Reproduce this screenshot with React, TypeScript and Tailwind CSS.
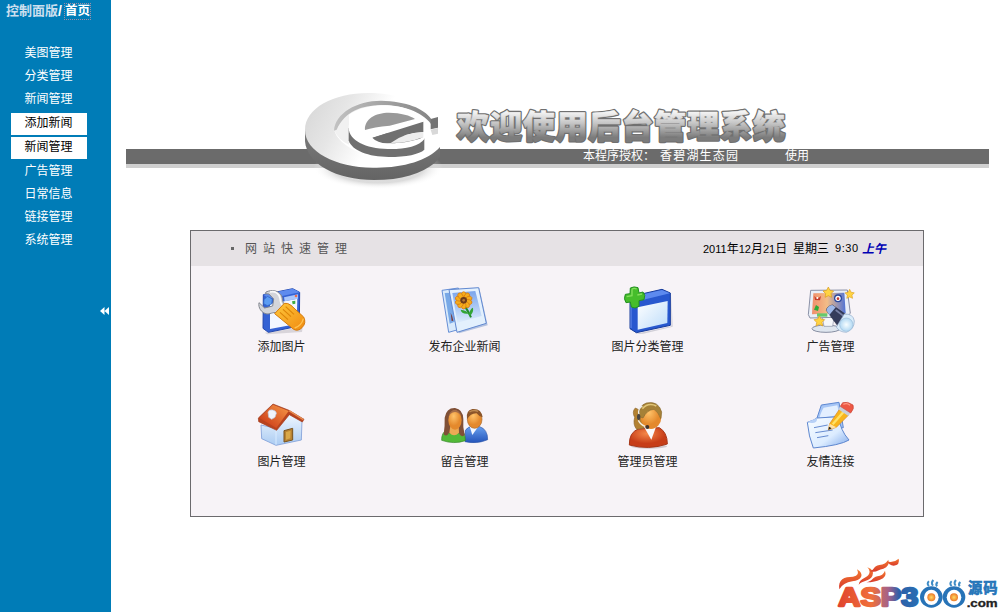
import React from 'react';

const menuItems = [
  { label: '美图管理' },
  { label: '分类管理' },
  { label: '新闻管理' },
  { label: '添加新闻', active: true, gap: 'mt-[3px]' },
  { label: '新闻管理', active: true, gap: 'mt-[2px]' },
  { label: '广告管理' },
  { label: '日常信息' },
  { label: '链接管理' },
  { label: '系统管理' },
];

function ToolIcon() {
  return (
    <svg viewBox="231 198 150 150" className="w-[50px] h-[50px]">
      <defs>
        <linearGradient id="toolOrange" x1="0" y1="0" x2="1" y2="1">
          <stop offset="0" stopColor="#ffc93c" />
          <stop offset="1" stopColor="#f08a10" />
        </linearGradient>
      </defs>
      <path d="M254 338 L368 322 L366 336 L262 343 Z" fill="#b9b6bd" opacity=".5" />
      <path d="M250 224 L338 206 L359 217 L358 318 L265 337 L249 325 Z" fill="#3562d4" stroke="#2347ad" strokeWidth="3" strokeLinejoin="round" />
      <path d="M250 224 L338 206 L359 217 L268 236 Z" fill="#5e8bee" />
      <path d="M270 252 L352 236 L350 312 L270 327 Z" fill="#f3f7ff" />
      <path d="M312 232 L354 223 L354 236 L314 244 Z" fill="#a9c6fb" />
      <circle cx="348" cy="228" r="4" fill="#ef6a4a" />
      <path d="M336 244 l10 -2 v9 l-8 2z" fill="#3faa40" />
      <path d="M258 216 C276 208 296 211 305 228 C309 238 306 248 315 254 L292 281 C283 273 274 282 261 282 C244 279 234 263 237 248 L254 264 L278 258 L281 237 L267 222 L256 221 Z" fill="#d3d5da" stroke="#83868f" strokeWidth="3" strokeLinejoin="round" />
      <path d="M270 216 C286 212 297 221 300 234 C301 246 303 254 309 257" fill="none" stroke="#fafafa" strokeWidth="5" />
      <path d="M252 239 L262 229 L277 237 L275 252 L262 257 L251 251 Z" fill="#5c9cf3" stroke="#2e62bd" strokeWidth="2" />
      <path d="M284 281 L313 250 Q323 248 333 256 L371 291 Q380 309 366 323 Q354 335 341 328 Z" fill="url(#toolOrange)" stroke="#d47a0c" strokeWidth="3" strokeLinejoin="round" />
      <path d="M309 268 L333 290 M317 260 L342 283 M300 277 L324 299" stroke="#dc8508" strokeWidth="3.5" />
      <path d="M344 324 Q365 317 370 296" stroke="#ffc252" strokeWidth="4" fill="none" />
    </svg>
  );
}

function PhotosIcon() {
  const petals = [0, 36, 72, 108, 144, 180, 216, 252, 288, 324];
  return (
    <svg viewBox="60 18 150 150" className="w-[50px] h-[50px]">
      <defs>
        <linearGradient id="photoSky" x1="0" y1="0" x2="0" y2="1">
          <stop offset="0" stopColor="#7aa5ec" />
          <stop offset="1" stopColor="#ddecfc" />
        </linearGradient>
      </defs>
      <path d="M66 31 L115 24 L128 145 L86 157 Z" fill="#d9eafb" stroke="#668ed6" strokeWidth="3" strokeLinejoin="round" />
      <path d="M74 39 L93 38 L104 125 L89 131 Z" fill="#78a8e6" />
      <path d="M92 98 l5 12 l3 12 l-5 1z" fill="#7d3434" />
      <path d="M92 28 L178 24 L203 136 L117 160 L108 145 Z" fill="#87a2d0" opacity=".6" />
      <path d="M87 29 L176 23 L199 130 L111 157 Z" fill="#e3f0fd" stroke="#6289d1" strokeWidth="3" strokeLinejoin="round" />
      <path d="M97 39 L166 33 L185 108 L112 128 Z" fill="url(#photoSky)" />
      <path d="M135 79 Q146 96 153 112" fill="none" stroke="#248b2b" strokeWidth="6" />
      <path d="M145 101 Q124 103 122 89 Q139 90 147 101 Q152 84 159 83 Q162 98 149 108" fill="#33a535" />
      {petals.map(angle => (
        <ellipse key={angle} cx="131" cy="45" rx="7" ry="10" fill="#f4ad1c" stroke="#d7740e" strokeWidth="2" transform={`rotate(${angle} 131 61)`} />
      ))}
      <circle cx="131" cy="61" r="10" fill="#6e3c19" />
      <circle cx="131" cy="61" r="4" fill="#b87931" />
    </svg>
  );
}

function FolderAddIcon() {
  return (
    <svg viewBox="69 198 150 150" className="w-[50px] h-[50px]">
      <defs>
        <linearGradient id="folderPage" x1="0" y1="0" x2="1" y2="1">
          <stop offset="0" stopColor="#ffffff" />
          <stop offset="1" stopColor="#bcdcfa" />
        </linearGradient>
      </defs>
      <path d="M104 342 L214 319 L214 225 L218 320 L130 341 Z" fill="#aaaab8" opacity=".5" />
      <path d="M90 230 L186 208 L211 219 L211 316 L109 338 L90 326 Z" fill="#2858cf" stroke="#173b9b" strokeWidth="3" strokeLinejoin="round" />
      <path d="M92 231 L186 210 L210 220 L112 244 Z" fill="#5d8aef" />
      <path d="M113 262 L203 243 L202 309 L113 329 Z" fill="url(#folderPage)" />
      <path d="M93 232 L93 324" stroke="#688eed" strokeWidth="3" />
      <path d="M91 204 Q102 198 114 203 L117 219 L129 216 Q138 225 132 239 L117 242 L117 259 Q105 268 94 261 L91 246 L78 248 Q70 237 76 223 L90 221 Z" fill="#46bd2b" stroke="#229020" strokeWidth="3" strokeLinejoin="round" />
      <path d="M96 207 Q103 203 110 207 M112 225 L126 222 M96 208 L96 227 L80 230" fill="none" stroke="#83df5c" strokeWidth="4" />
    </svg>
  );
}

const starPath = 'M0 -16 L5 -6 L16 -4 L8 4 L10 15 L0 10 L-10 15 L-8 4 L-16 -4 L-5 -6 Z';

function AdvertIcon() {
  return (
    <svg viewBox="616 198 150 150" className="w-[50px] h-[50px]">
      <defs>
        <linearGradient id="adScreen">
          <stop offset="0" stopColor="#ef8e6c" />
          <stop offset=".45" stopColor="#f3bd87" />
          <stop offset="1" stopColor="#4f73d5" />
        </linearGradient>
        <radialGradient id="adLens">
          <stop offset="0" stopColor="#f8feff" />
          <stop offset="1" stopColor="#b2d8f3" />
        </radialGradient>
      </defs>
      <ellipse cx="676" cy="326" rx="42" ry="11" fill="#dfe6ef" stroke="#888fa3" strokeWidth="3" />
      <path d="M665 292 L700 292 L696 319 L670 319 Z" fill="#f5f7fb" stroke="#8a90a5" strokeWidth="2" />
      <path d="M630 211 L740 210 L749 280 L737 291 L628 294 L623 284 Z" fill="#e9eff8" stroke="#8b91a7" strokeWidth="3" strokeLinejoin="round" />
      <path d="M638 220 L731 218 L735 279 L634 283 Z" fill="url(#adScreen)" />
      <path d="M641 228 Q650 240 661 228 L658 241 L643 240 Z" fill="#c43c2b" />
      <circle cx="650" cy="234" r="3" fill="#fff" />
      <circle cx="712" cy="235" r="12" fill="#28489f" />
      <circle cx="712" cy="235" r="8" fill="#fff" />
      <circle cx="712" cy="236" r="4" fill="#bf3b31" />
      <path d="M646 255 l9 6 l-3 12 l-12 -4z" fill="#2cab38" />
      <path d="M649 280 h31 v10 h-31z" fill="#67c96b" />
      <path d="M677 271 Q679 259 695 255 L739 286 L714 321 Z" fill="#343c5b" stroke="#242b43" strokeWidth="2" />
      <path d="M677 271 Q680 257 695 255 L705 262 L686 285 Z" fill="#9eb8e8" />
      <path d="M705 270 L731 290" stroke="#7881a5" strokeWidth="5" />
      <path d="M731 282 Q758 281 761 303 Q761 328 737 337 Q715 336 707 321 Z" fill="#d9ecfa" stroke="#8fa9c8" strokeWidth="2" />
      <circle cx="737" cy="314" r="20" fill="url(#adLens)" stroke="#9bbcd8" strokeWidth="2" />
      <g fill="#ffd342" stroke="#d99c1c" strokeWidth="2">
        <path d={starPath} transform="translate(683 217)" />
        <path d={starPath} transform="translate(747 222) scale(.87)" />
        <path d={starPath} transform="translate(656 303)" />
      </g>
    </svg>
  );
}

function HouseIcon() {
  return (
    <svg viewBox="51 33 150 150" className="w-[50px] h-[50px]">
      <defs>
        <linearGradient id="houseRoof" x1="0" y1="1" x2="1" y2="0">
          <stop offset="0" stopColor="#c62f12" />
          <stop offset="1" stopColor="#f79a48" />
        </linearGradient>
        <linearGradient id="houseWall" x1="0" y1="0" x2="0" y2="1">
          <stop offset="0" stopColor="#f4faff" />
          <stop offset="1" stopColor="#aacbf2" />
        </linearGradient>
      </defs>
      <path d="M63 105 L108 115 L149 67 L186 90 L184 150 L108 166 L65 146 Z" fill="url(#houseWall)" stroke="#7f9fd8" strokeWidth="2.5" strokeLinejoin="round" />
      <path d="M108 114 L108 164" stroke="#d9ebff" strokeWidth="3" />
      <path d="M55 84 L99 42 L147 61 L192 88 L187 96 L148 74 L110 121 L56 95 Z" fill="#b9431e" stroke="#a23b1c" strokeWidth="2" strokeLinejoin="round" />
      <path d="M58 84 L99 44 L146 63 L109 114 Z" fill="url(#houseRoof)" />
      <path d="M147 62 L190 89" stroke="#e88c50" strokeWidth="4" />
      <path d="M84 66 Q87 58 98 60 Q109 62 109 70 L105 82 L95 88 L86 82 Z" fill="#f0f5fc" stroke="#bdc7db" strokeWidth="2" />
      <path d="M132 122 L158 115 L158 150 L132 156 Z" fill="#b88231" stroke="#79531e" strokeWidth="3" />
      <path d="M138 126 L152 122 L151 145 L138 149 Z" fill="#d9a849" />
    </svg>
  );
}

function PeopleIcon() {
  return (
    <svg viewBox="600 33 150 150" className="w-[50px] h-[50px]">
      <defs>
        <radialGradient id="faceTone" cx=".4" cy=".3">
          <stop offset="0" stopColor="#ffc36a" />
          <stop offset="1" stopColor="#e4892c" />
        </radialGradient>
        <linearGradient id="blueCoat" x1="0" y1="0" x2="0" y2="1">
          <stop offset="0" stopColor="#68a0ef" />
          <stop offset="1" stopColor="#2454ba" />
        </linearGradient>
      </defs>
      <path d="M676 121 Q684 109 700 109 L719 110 Q743 118 743 149 Q712 163 675 155 Z" fill="url(#blueCoat)" stroke="#2a55a9" strokeWidth="2" />
      <path d="M689 109 L697 135 L714 111 Z" fill="#f2f7ff" />
      <ellipse cx="704" cy="88" rx="22" ry="27" fill="url(#faceTone)" stroke="#a9672b" strokeWidth="2" />
      <path d="M681 88 Q676 62 697 57 Q724 54 728 82 Q718 81 710 70 Q692 69 681 88" fill="#8b552a" />
      <path d="M688 66 Q701 58 714 64" stroke="#bd8a52" strokeWidth="4" fill="none" />
      <path d="M605 151 Q604 128 621 119 L663 119 Q676 128 676 152 Q642 164 605 151 Z" fill="#52b938" stroke="#328525" strokeWidth="2" />
      <path d="M611 133 Q615 106 614 83 Q619 53 645 54 Q669 58 670 87 Q668 111 674 135 Q663 144 657 130 L626 130 Q620 142 611 133 Z" fill="#805037" />
      <path d="M631 108 H656 L657 128 Q642 143 628 128 Z" fill="#ebaa55" />
      <ellipse cx="645" cy="90" rx="20" ry="29" fill="url(#faceTone)" />
      <path d="M625 84 Q629 67 645 66 Q655 66 664 79 Q657 59 644 60 Q629 61 625 84" fill="#a66d48" />
    </svg>
  );
}

function OperatorIcon() {
  return (
    <svg viewBox="69 33 150 150" className="w-[50px] h-[50px]">
      <defs>
        <radialGradient id="redCoat" cx=".45" cy=".3">
          <stop offset="0" stopColor="#f48748" />
          <stop offset="1" stopColor="#c73d18" />
        </radialGradient>
      </defs>
      <ellipse cx="147" cy="169" rx="54" ry="7" fill="#b9aeb2" opacity=".6" />
      <path d="M88 165 Q87 127 115 117 L178 113 Q202 127 202 162 Q147 181 88 165 Z" fill="url(#redCoat)" stroke="#a73719" strokeWidth="3" />
      <path d="M134 114 L154 149 L168 111 Z" fill="#f9fafc" />
      <path d="M106 54 Q95 65 104 82 Q98 104 110 118 L132 114 L128 65 Z" fill="#b38131" stroke="#8c6631" strokeWidth="2" />
      <ellipse cx="153" cy="82" rx="31" ry="35" fill="url(#faceTone)" />
      <path d="M119 80 Q113 48 139 39 Q175 31 185 66 Q184 81 182 86 Q176 67 162 58 Q141 59 129 84 Z" fill="#a68137" stroke="#896c33" strokeWidth="2" />
      <path d="M127 56 Q145 36 169 48" fill="none" stroke="#e1c678" strokeWidth="5" />
      <path d="M117 73 Q112 57 127 48" fill="none" stroke="#efefed" strokeWidth="4" />
      <ellipse cx="116" cy="81" rx="5" ry="9" fill="#494543" />
      <path d="M115 91 Q122 105 136 109" fill="none" stroke="#f5eee1" strokeWidth="4" />
      <circle cx="142" cy="111" r="6" fill="#42342e" />
    </svg>
  );
}

function NoteIcon() {
  return (
    <svg viewBox="617 33 150 150" className="w-[50px] h-[50px]">
      <defs>
        <linearGradient id="notePaper" x1="0" y1="0" x2="1" y2="1">
          <stop offset="0" stopColor="#f9fdff" />
          <stop offset=".6" stopColor="#dcecff" />
          <stop offset="1" stopColor="#7da7ea" />
        </linearGradient>
      </defs>
      <path d="M663 45 L716 37 L729 113 L670 120 L650 84 Z" fill="#a6c5f5" stroke="#5e88d2" strokeWidth="3" strokeLinejoin="round" />
      <path d="M657 84 Q663 63 670 53 L711 46 L717 75 Z" fill="#e3efff" />
      <path d="M621 97 Q641 91 650 84 L715 80 Q719 120 746 150 Q720 166 639 174 Q625 140 621 97 Z" fill="url(#notePaper)" stroke="#5d86cf" strokeWidth="3" strokeLinejoin="round" />
      <path d="M650 84 Q652 98 638 99 Q627 100 622 96" fill="#b7d1f7" />
      <path d="M641 113 L682 105 M645 128 L697 120 M650 143 L684 137" stroke="#668bd0" strokeWidth="3" />
      <path d="M684 120 L688 101 L718 57 L744 76 L708 112 Z" fill="#f8b51c" stroke="#d8811b" strokeWidth="2" strokeLinejoin="round" />
      <path d="M697 103 L730 65" stroke="#ffe268" strokeWidth="7" />
      <path d="M684 120 L688 101 L708 112 Z" fill="#ffe2a6" />
      <path d="M684 120 L686 110 L694 115 Z" fill="#222" />
      <path d="M714 58 L720 49 L751 69 L744 78 Z" fill="#c8ced8" />
      <path d="M720 49 L727 38 Q742 33 758 45 Q763 55 751 69 Z" fill="#ed5845" stroke="#c93f32" strokeWidth="2" />
      <path d="M729 43 Q740 38 749 46" stroke="#ff9b83" strokeWidth="4" fill="none" />
    </svg>
  );
}

const shortcuts = [
  { label: '添加图片', icon: ToolIcon },
  { label: '发布企业新闻', icon: PhotosIcon },
  { label: '图片分类管理', icon: FolderAddIcon },
  { label: '广告管理', icon: AdvertIcon },
  { label: '图片管理', icon: HouseIcon },
  { label: '留言管理', icon: PeopleIcon },
  { label: '管理员管理', icon: OperatorIcon },
  { label: '友情连接', icon: NoteIcon },
];

// Embossed "e" disc on the banner
function Emblem() {
  return (
    <svg viewBox="0 0 450 315" className="w-[150px] h-[105px]">
      <defs>
        <linearGradient id="discFace" x1="0" y1=".1" x2="1" y2=".4">
          <stop offset="0" stopColor="#d6d6d6" />
          <stop offset=".3" stopColor="#e6e6e6" />
          <stop offset=".6" stopColor="#ffffff" />
        </linearGradient>
        <linearGradient id="discSide" x1="0" y1="0" x2="0" y2="1">
          <stop offset="0" stopColor="#7b7b7b" />
          <stop offset="1" stopColor="#646464" />
        </linearGradient>
        <linearGradient id="discWell" x1="0" y1="0" x2="1" y2="0">
          <stop offset="0" stopColor="#c2c2c2" />
          <stop offset="1" stopColor="#858585" />
        </linearGradient>
        <radialGradient id="discShadow">
          <stop offset=".7" stopColor="#c4c4c4" />
          <stop offset="1" stopColor="#fff" stopOpacity="0" />
        </radialGradient>
      </defs>
      <ellipse cx="235" cy="240" rx="195" ry="64" fill="url(#discShadow)" opacity=".6" />
      <path d="M15 124 V160 C21 228 108 276 222 276 C304 276 366 256 405 224 L420 206 V160 Z" fill="url(#discSide)" />
      <path d="M15 126 C15 60 101 15 205 15 C296 15 364 46 392 92 L420 120 V177 C382 219 305 241 219 239 C106 239 15 190 15 126 Z" fill="url(#discFace)" />
      <path d="M103 128 C115 166 173 203 247 207 L420 145 L386 92 C358 66 304 53 244 53 C176 53 130 80 103 128 Z" fill="#fff" />
      <path d="M103 128 Q112 96 147 76 V170 Q117 157 103 128" fill="#f1f1f1" />
      <path d="M102 128 C105 76 170 38 243 38 C320 40 371 61 393 92 V108 C365 70 307 52 244 52 C184 52 136 70 110 125 Z" fill="url(#discWell)" />
      <path d="M392 93 L414 87 V119 L392 124 Z" fill="#747474" />
      <path d="M392 125 L414 120 V137 L397 141 Z" fill="#d8d8d8" />
      <path d="M146 120 V157 C155 188 206 207 266 207 C319 207 358 199 373 185 V150 Z" fill="#707070" />
      <path d="M146 120 C146 78 196 52 252 52 C316 52 358 75 370 101 L219 149 Q250 169 290 165 Q341 161 374 146 V152 C357 176 314 184 263 183 C197 182 147 157 146 120 Z" fill="#fff" />
      <path d="M195 126 C193 93 226 74 267 74 C302 74 332 83 345 93 L269 113 Q221 117 195 126 Z" fill="#999" />
      <path d="M217 149 L370 101 V132 Q312 134 272 165 Q234 168 217 149 Z" fill="#707070" />
      <path d="M272 165 Q312 134 370 132 V147 Q326 165 272 165 Z" fill="#ededed" />
    </svg>
  );
}

function Banner() {
  return (
    <div className="grid h-[103px] w-[863px]">
      <div className="col-start-1 row-start-1 flex flex-col pt-[58px]">
        <div className="h-[15px] bg-[#6b6b6b] pl-[457px] flex text-white text-[12px] leading-[14px] whitespace-pre">
          <span className="w-[77px]">本程序授权：</span>
          <span className="w-[125px] tracking-[1.2px]">香碧湖生态园</span>
          <span>使用</span>
        </div>
        <div className="h-[4px] bg-[#cfcfcf]" />
      </div>
      <div className="col-start-1 row-start-1 -mt-[3px] flex items-start pl-[174px]">
        <Emblem />
        <svg viewBox="0 0 340 50" className="ml-[2px] mt-[11px] w-[340px] h-[50px] font-['Noto_Sans_CJK_SC',sans-serif]">
          <defs>
            <linearGradient id="titleFill" x1="0" y1="0" x2="0" y2="1">
              <stop offset=".25" stopColor="#f4f4f4" />
              <stop offset=".5" stopColor="#c4c4c4" />
              <stop offset=".8" stopColor="#7c7c7c" />
            </linearGradient>
          </defs>
          <g fontSize="32" fontWeight="900" strokeLinejoin="round">
            <text x="5" y="38.5" textLength="328" fill="#707070" stroke="#707070" strokeWidth="3">欢迎使用后台管理系统</text>
            <text x="5" y="38.5" textLength="328" fill="url(#titleFill)" stroke="url(#titleFill)" strokeWidth=".5">欢迎使用后台管理系统</text>
          </g>
        </svg>
      </div>
    </div>
  );
}

function SiteLogo() {
  return (
    <svg viewBox="0 0 549 186" className="w-[183px] h-[62px]">
      <defs>
        <linearGradient id="logoRed" x1="0" y1="0" x2="0" y2="1">
          <stop offset="0" stopColor="#f47a30" />
          <stop offset="1" stopColor="#d83a2c" />
        </linearGradient>
        <linearGradient id="logoText" gradientUnits="userSpaceOnUse" x1="35" y1="0" x2="295" y2="0">
          <stop offset="0" stopColor="#df422e" />
          <stop offset=".4" stopColor="#f0703a" />
          <stop offset=".6" stopColor="#a2618b" />
          <stop offset=".72" stopColor="#2d5fa8" />
          <stop offset="1" stopColor="#2872b5" />
        </linearGradient>
        <radialGradient id="logoYolk">
          <stop offset="0" stopColor="#ffda63" />
          <stop offset="1" stopColor="#ec7928" />
        </radialGradient>
      </defs>
      <path d="M43 118 C38 88 58 80 84 80 Q106 78 96 58 C120 72 110 92 82 94 Q54 98 43 118 Z" fill="url(#logoRed)" />
      <path d="M101 104 C105 82 128 86 133 70 Q136 61 127 52 Q150 60 142 78 C134 94 112 92 101 104 Z" fill="url(#logoRed)" />
      <path d="M132 62 C150 63 144 47 163 45 Q182 43 190 29 Q195 49 175 56 C158 59 152 71 132 62 Z" fill="url(#logoRed)" />
      <path d="M185 34 Q204 41 221 26 Q226 44 206 47 Q192 46 185 34 Z" fill="url(#logoRed)" />
      <path d="M124 97 C143 95 142 81 157 79 Q174 77 180 62 Q187 82 165 89 Q151 96 124 97 Z" fill="url(#logoRed)" />
      <text x="40" y="168" textLength="240" lengthAdjust="spacingAndGlyphs" fontSize="77" fontWeight="700" fill="url(#logoText)" stroke="url(#logoText)" strokeWidth="7" strokeLinejoin="round" className="font-['Liberation_Sans',sans-serif]">ASP3</text>
      {[319, 387].map(cx => (
        <g key={cx}>
          <ellipse cx={cx} cy="141" rx="34" ry="32" fill="#2773b7" />
          <ellipse cx={cx} cy="142" rx="22" ry="23" fill="#fff" />
          <circle cx={cx} cy="142" r="12" fill="url(#logoYolk)" />
          <path d={`M${cx - 7} 108 q-8 -7 0 -14 M${cx + 5} 107 q-7 -8 1 -17 M${cx + 17} 109 q-5 -7 2 -13`} fill="none" stroke="#3f8cc6" strokeWidth="6" />
        </g>
      ))}
      <text x="429" y="130" fontSize="43" fontWeight="700" textLength="89" fill="#2475b9" stroke="#2475b9" strokeWidth="2" className="font-['Noto_Sans_CJK_SC',sans-serif]">源码</text>
      <text x="425" y="172" fontSize="34" fontWeight="700" textLength="93" lengthAdjust="spacingAndGlyphs" fill="#222" stroke="#222" className="font-['Liberation_Sans',sans-serif]">.com</text>
    </svg>
  );
}

export default function App() {
  return (
    <div className="flex h-[612px] w-[1008px] overflow-hidden bg-white font-['Liberation_Sans','Noto_Sans_CJK_SC',sans-serif] text-[12px] text-black">
      {/* Sidebar */}
      <aside className="flex w-[111px] shrink-0 flex-col bg-[#007cb7] text-white">
        <div className="flex h-[41px] items-start pl-[6px] pt-[3px] font-bold leading-[16px]">
          <span className="text-[#cbdfee] text-[13px]">控制面版</span>
          <span className="pr-[2px] text-[14px]">/</span>
          <a href="#" className="h-[17px] border border-dotted border-[#9d90a7] text-[12.5px] leading-[15px]">首页</a>
        </div>
        <nav className="flex h-[206px] flex-col pl-[11px]">
          {menuItems.map((item, i) => (
            <a
              key={i}
              href="#"
              className={
                item.active
                  ? `flex h-[22px] w-[76px] shrink-0 items-center justify-center bg-white pr-px pb-[2px] leading-[20px] text-black ${item.gap}`
                  : 'flex h-[23px] w-[76px] shrink-0 items-center justify-center pr-px'
              }
            >
              {item.label}
            </a>
          ))}
        </nav>
        <button className="mt-[59px] mr-[2px] self-end" aria-label="collapse">
          <svg viewBox="0 0 9 10" className="block h-[10px] w-[9px]">
            <path d="M4.5 1 V9 L0 5 Z M9 1 V9 L4.5 5 Z" fill="#fff" />
          </svg>
        </button>
      </aside>

      {/* Main */}
      <main className="flex flex-1 flex-col pt-[91px]">
        <div className="pl-[15px]">
          <Banner />
        </div>

        <section className="ml-[79px] mt-[36px] h-[287px] w-[734px] shrink-0 border border-[#6b6a6d] bg-[#f7f3f7]">
          <div className="flex h-[35px] items-center justify-between bg-[#e6e2e5] pl-[40px] pr-[37px]">
            <div className="flex items-center text-[#555]">
              <span className="mr-[11px] h-[3px] w-[3px] bg-[#666]" />
              <span className="tracking-[6px]">网站快速管理</span>
            </div>
            <div className="flex items-center whitespace-pre">
              <span className="w-[90px]"><span className="text-[11px]">2011</span>年<span className="text-[11px]">12</span>月<span className="text-[11px]">21</span>日</span>
              <span className="w-[42px]">星期三</span>
              <span className="w-[27px] text-[11px] tracking-[0.6px]">9:30</span>
              <span className="font-bold italic text-[#0000b4]">上午</span>
            </div>
          </div>
          <div className="-ml-[1px] grid grid-cols-[repeat(4,183px)] pt-[20px]">
            {shortcuts.map(({ label, icon: Icon }) => (
              <a key={label} href="#" className="flex h-[115px] flex-col items-center text-[#222]">
                <Icon />
                <span className="mt-[2px] leading-[18px]">{label}</span>
              </a>
            ))}
          </div>
        </section>

        <div className="mt-auto flex justify-end">
          <SiteLogo />
        </div>
      </main>
    </div>
  );
}
